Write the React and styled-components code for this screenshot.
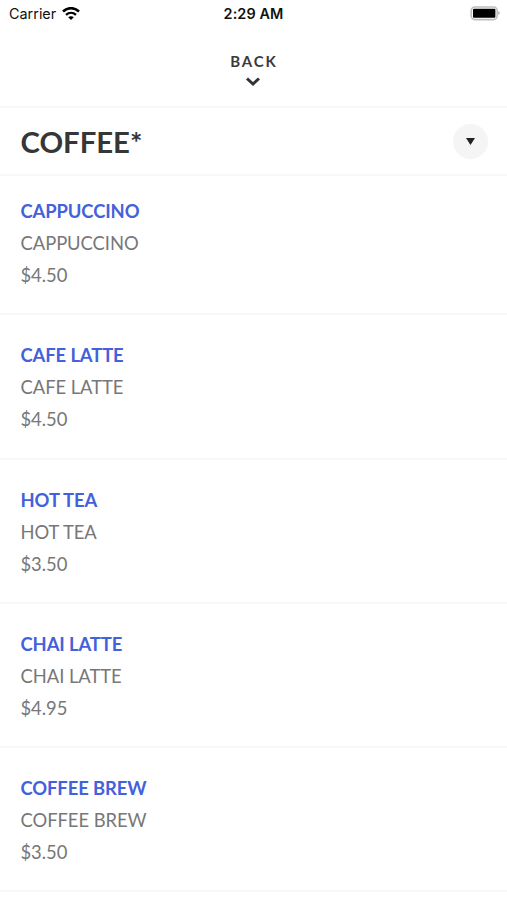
import React from 'react'
import styled, { createGlobalStyle } from 'styled-components'

const GlobalStyle = createGlobalStyle`
  * {
    box-sizing: border-box;
  }

  body {
    margin: 0;
    background: #fff;
    font-family: Lato, sans-serif;
  }
`

const Screen = styled.main`
  height: 900px;
  overflow: hidden;
  background: #fff;
`

const StatusBar = styled.div`
  display: grid;
  grid-template-columns: 1fr auto 1fr;
  align-items: center;
  height: 27px;
  padding: 0 7px 0 9px;
  color: #111;
  font-family: Inter, sans-serif;
  font-size: 14.4px;
  line-height: 27px;
`

const Carrier = styled.div`
  display: flex;
  align-items: center;
  gap: 6px;
`

const Time = styled.div`
  margin-right: 2px;
  font-weight: 600;
  letter-spacing: 0.1px;
`

const Battery = styled.svg`
  justify-self: end;
`

const BackButton = styled.button`
  display: flex;
  flex-direction: column;
  align-items: center;
  width: 100%;
  height: 81px;
  padding: 24px 1px 0 0;
  border: 0;
  border-bottom: 2px solid #f7f7f7;
  background: none;
  color: #3a3a3a;
  font: 700 15px/20px Lato, sans-serif;
  letter-spacing: 1.8px;
`

const BackLabel = styled.span`
  margin-right: -1.8px;
`

const Category = styled.header`
  display: flex;
  align-items: center;
  justify-content: space-between;
  height: 68px;
  padding: 0 19px 0 20.5px;
  border-bottom: 2px solid #f7f7f7;
`

const Title = styled.h1`
  margin: 2px 0 0;
  color: #363636;
  font-size: 29.3px;
  font-weight: 700;
  line-height: 36px;
`

const ToggleButton = styled.button`
  display: flex;
  align-items: center;
  justify-content: center;
  width: 35px;
  height: 35px;
  padding: 0;
  border: 0;
  border-radius: 50%;
  background: #f5f5f5;
`

const Menu = styled.ul`
  margin: 0;
  padding: 0;
  list-style: none;
`

const MenuItem = styled.li`
  height: 144.2px;
  padding: 24px 20.5px 0;
  border-bottom: 2px solid #f7f7f7;
  color: #777;
  font-size: 18.4px;
  line-height: 32px;
  letter-spacing: -0.05px;

  &:first-child {
    height: 139.4px;
    padding-top: 19px;
  }
`

const ItemName = styled.div`
  color: #4461dc;
  font-weight: 700;
  letter-spacing: -0.1px;
`

const items = [
  { name: 'CAPPUCCINO', price: '$4.50' },
  { name: 'CAFE LATTE', price: '$4.50' },
  { name: 'HOT TEA', price: '$3.50' },
  { name: 'CHAI LATTE', price: '$4.95' },
  { name: 'COFFEE BREW', price: '$3.50' },
]

function WifiIcon() {
  return (
    <svg width="18" height="14" viewBox="0 0 18 14" fill="none" stroke="#000">
      <path d="M1 4.5C5.5 0 12.5 0 17 4.5" strokeWidth="2.5" />
      <path d="M4 7.9C7 5.2 11 5.2 14 7.9" strokeWidth="2.3" />
      <path d="M9 13L6.2 10.2C7.8 8.8 10.2 8.8 11.8 10.2Z" fill="#000" stroke="none" />
    </svg>
  )
}

function BatteryIcon() {
  return (
    <Battery width="30" height="16" viewBox="0 0 30 16">
      <rect x="1.2" y="1" width="26" height="12.6" rx="3.8" fill="#fff" stroke="#bdbdbd" strokeWidth="1.6" />
      <rect x="3" y="2.8" width="22.4" height="9" rx="1" fill="#000" />
      <path d="M28.3 5.1C30.2 6 30.2 8.2 28.3 9.1Z" fill="#aaa" />
    </Battery>
  )
}

function App() {
  return (
    <Screen>
      <GlobalStyle />
      <StatusBar>
        <Carrier>
          Carrier
          <WifiIcon />
        </Carrier>
        <Time>2:29 AM</Time>
        <BatteryIcon />
      </StatusBar>
      <BackButton>
        <BackLabel>BACK</BackLabel>
        <svg width="16" height="20" viewBox="0 0 16 20" fill="none" stroke="#333" strokeWidth="3">
          <path d="M2 7.5L8 13L14 7.5" />
        </svg>
      </BackButton>
      <Category>
        <Title>COFFEE*</Title>
        <ToggleButton aria-label="Choose category">
          <svg width="9" height="7" viewBox="0 0 9 7">
            <path d="M0 0H9L4.5 7Z" fill="#222" />
          </svg>
        </ToggleButton>
      </Category>
      <Menu>
        {items.map(({ name, price }) => (
          <MenuItem key={name}>
            <ItemName>{name}</ItemName>
            <div>{name}</div>
            <div>{price}</div>
          </MenuItem>
        ))}
      </Menu>
    </Screen>
  )
}

export default App
